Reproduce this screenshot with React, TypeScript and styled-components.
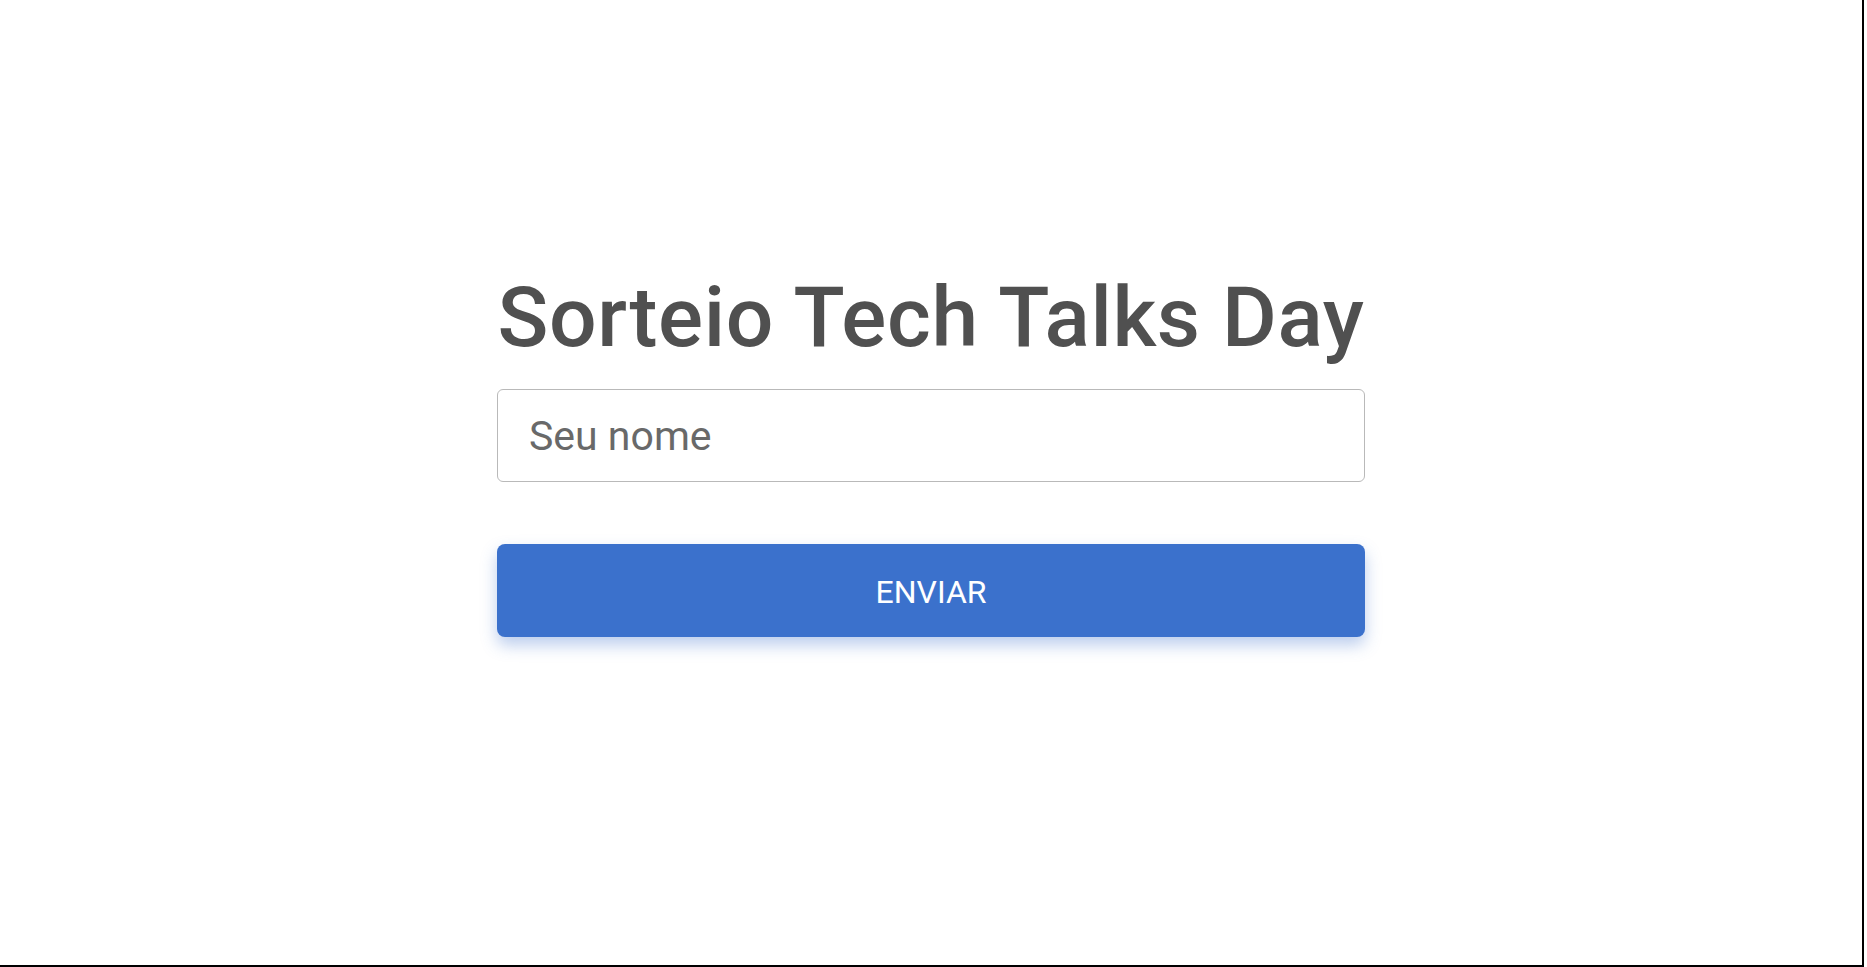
import React from "react";
import styled, { createGlobalStyle } from "styled-components";

const GlobalStyle = createGlobalStyle`
  html, body {
    margin: 0;
    padding: 0;
    background: #ffffff;
  }
  body {
    font-family: Roboto, "Liberation Sans", Arial, sans-serif;
  }
  * { box-sizing: border-box; }
`;

const Frame = styled.div`
  width: 1864px;
  height: 967px;
  border-right: 2px solid #000000;
  border-bottom: 2px solid #000000;
  background: #ffffff;
  display: flex;
  justify-content: center;
  align-items: flex-start;
  overflow: hidden;
`;

const Form = styled.form`
  width: 868px;
  margin-top: 265px;
  display: flex;
  flex-direction: column;
`;

const Title = styled.h1`
  margin: 0;
  font-family: Roboto, "Liberation Sans", Arial, sans-serif;
  font-weight: 500;
  font-size: 84px;
  letter-spacing: 0.6px;
  line-height: 106px;
  color: #505050;
  text-align: center;
  white-space: nowrap;
`;

const Input = styled.input`
  margin-top: 18px;
  height: 93px;
  width: 100%;
  border: 1px solid #b9b9b9;
  border-radius: 6px;
  padding: 0 31px;
  font-family: Roboto, "Liberation Sans", Arial, sans-serif;
  font-size: 41px;
  color: #333333;
  background: #ffffff;
  outline: none;
  &::placeholder {
    color: #696969;
    opacity: 1;
  }
`;

const Button = styled.button`
  margin-top: 62px;
  height: 93px;
  width: 100%;
  border: none;
  border-radius: 8px;
  background: #3b71cc;
  color: #ffffff;
  font-family: Roboto, "Liberation Sans", Arial, sans-serif;
  font-weight: 400;
  font-size: 32px;
  padding-top: 4px;
  text-transform: uppercase;
  box-shadow: 0 8px 16px rgba(59, 113, 204, 0.35);
  cursor: pointer;
`;

export default function App() {
  return (
    <>
      <GlobalStyle />
      <Frame>
        <Form onSubmit={(e) => e.preventDefault()}>
          <Title>Sorteio Tech Talks Day</Title>
          <Input type="text" placeholder="Seu nome" />
          <Button type="submit">Enviar</Button>
        </Form>
      </Frame>
    </>
  );
}
